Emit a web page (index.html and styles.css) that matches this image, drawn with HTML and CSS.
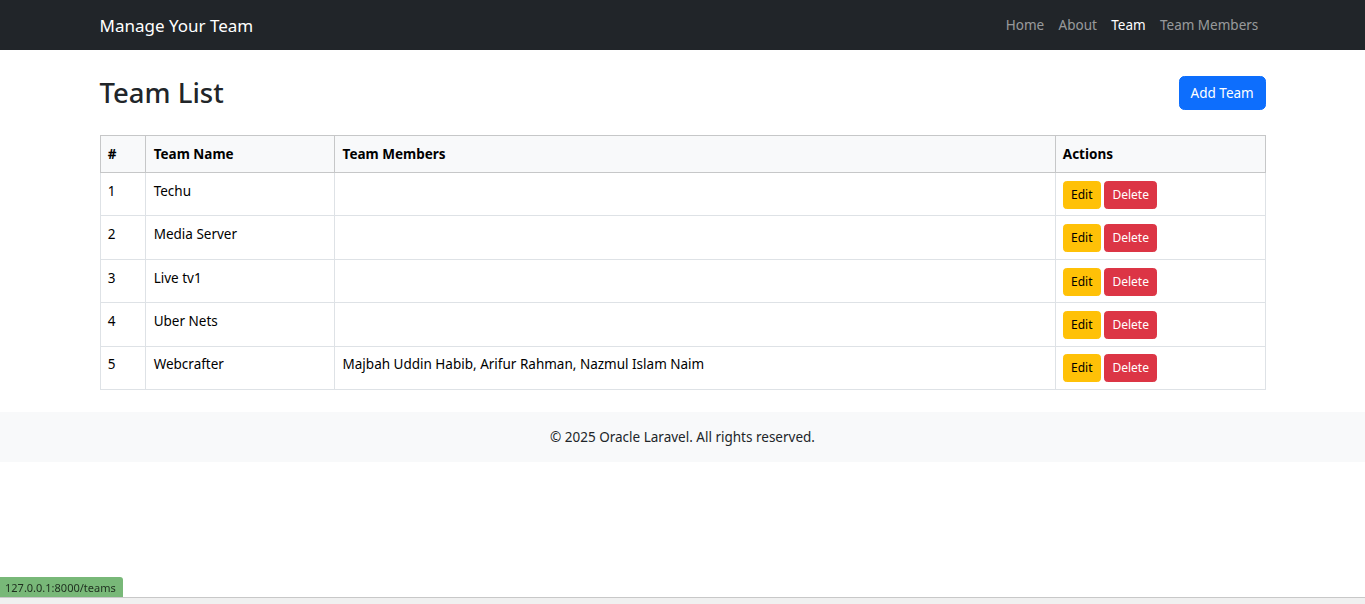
FILE: index.html
```html
<!DOCTYPE html>
<html lang="en">
<head>
<meta charset="utf-8">
<title>Team List</title>
<link rel="stylesheet" href="styles.css">
</head>
<body>
<nav class="navbar">
  <div class="container nav-inner">
    <a class="brand" href="#">Manage Your Team</a>
    <ul class="nav-links">
      <li><a href="#">Home</a></li>
      <li><a href="#">About</a></li>
      <li><a href="#" class="active">Team</a></li>
      <li><a href="#">Team Members</a></li>
    </ul>
  </div>
</nav>
<main class="container main">
  <div class="page-head">
    <h1>Team List</h1>
    <a href="#" class="btn btn-primary">Add Team</a>
  </div>
  <table class="table">
    <thead>
      <tr>
        <th class="col-num">#</th>
        <th class="col-name">Team Name</th>
        <th class="col-members">Team Members</th>
        <th class="col-actions">Actions</th>
      </tr>
    </thead>
    <tbody>
      <tr><td>1</td><td>Techu</td><td></td><td><a href="#" class="btn-sm btn-warning">Edit</a><a href="#" class="btn-sm btn-danger">Delete</a></td></tr>
      <tr><td>2</td><td>Media Server</td><td></td><td><a href="#" class="btn-sm btn-warning">Edit</a><a href="#" class="btn-sm btn-danger">Delete</a></td></tr>
      <tr><td>3</td><td>Live tv1</td><td></td><td><a href="#" class="btn-sm btn-warning">Edit</a><a href="#" class="btn-sm btn-danger">Delete</a></td></tr>
      <tr><td>4</td><td>Uber Nets</td><td></td><td><a href="#" class="btn-sm btn-warning">Edit</a><a href="#" class="btn-sm btn-danger">Delete</a></td></tr>
      <tr><td>5</td><td>Webcrafter</td><td>Majbah Uddin Habib, Arifur Rahman, Nazmul Islam Naim</td><td><a href="#" class="btn-sm btn-warning">Edit</a><a href="#" class="btn-sm btn-danger">Delete</a></td></tr>
    </tbody>
  </table>
</main>
<footer class="footer">
  <p>© 2025 Oracle Laravel. All rights reserved.</p>
</footer>
<div class="status-bar">
  <span class="status-url">127.0.0.1:8000/teams</span>
</div>
</body>
</html>
```
FILE: styles.css
```css
* { box-sizing: border-box; }
html, body { margin: 0; padding: 0; }
body {
  font-family: "Noto Sans", "Open Sans", "Liberation Sans", sans-serif;
  font-size: 13.5px;
  line-height: 21.6px;
  color: #212529;
  background: #fff;
}
a { text-decoration: none; }

.container {
  width: 1166px;
  margin: 0 auto;
}

.navbar {
  background: #212529;
  height: 50px;
}
.nav-inner {
  height: 50px;
  display: flex;
  align-items: center;
  justify-content: space-between;
}
.brand {
  color: #fff;
  font-size: 17px;
  line-height: 27px;
  padding-top: 1px;
}
.nav-links {
  list-style: none;
  margin: 0;
  padding: 0;
  display: flex;
}
.nav-links a {
  display: block;
  padding: 8px 7.2px 6px;
  color: rgba(255,255,255,0.55);
  font-size: 13.5px;
}
.nav-links a.active { color: #fff; }

.main { padding-top: 22px; }
.page-head {
  display: flex;
  justify-content: space-between;
  align-items: center;
  margin-bottom: 21px;
  height: 42px;
}
h1 {
  margin: 0;
  font-size: 27.5px;
  font-weight: 500;
  line-height: 1.2;
  padding-bottom: 1px;
}

.btn {
  display: inline-block;
  padding: 6.4px 10.8px 4.4px;
  font-size: 13.5px;
  line-height: 21.6px;
  border: 1px solid transparent;
  border-radius: 5.4px;
}
.btn-primary {
  background: #0d6efd;
  border-color: #0d6efd;
  color: #fff;
}

.table {
  width: 100%;
  border-collapse: collapse;
  margin-bottom: 22px;
}
.table th, .table td {
  border: 1px solid #dee2e6;
  padding: 7.8px 7.2px 6.5px;
  text-align: left;
  vertical-align: top;
}
.table thead th {
  background: #f8f9fa;
  border-color: #c6c7c8;
  font-weight: 700;
  color: #000;
  vertical-align: bottom;
  padding: 8.2px 7.2px 6.2px;
}
.table tbody td { color: #000; }
.col-num { width: 46px; }
.col-name { width: 189px; }
.col-members { width: 721px; }
.col-actions { width: 210px; }

.btn-sm {
  display: inline-block;
  padding: 4.1px 7.2px 3.1px;
  font-size: 12px;
  line-height: 18.9px;
  border: 1px solid transparent;
  border-radius: 3.6px;
  margin-right: 3.6px;
}
.btn-warning { background: #ffc107; border-color: #ffc107; color: #000; }
.btn-danger { background: #dc3545; border-color: #dc3545; color: #fff; }

.footer {
  background: #f8f9fa;
  text-align: center;
  padding: 15.4px 0 13.4px;
}
.footer p { margin: 0; line-height: 21.6px; }

.status-bar {
  position: fixed;
  left: 0;
  right: 0;
  bottom: 0;
  height: 26px;
  border-bottom: 6px solid #f0f0f0;
  display: flex;
  align-items: flex-end;
}
.status-bar::after {
  content: "";
  position: absolute;
  left: 0; right: 0; bottom: 0;
  height: 1px;
  background: #c8c8c8;
}
.status-url {
  background: #78b878;
  color: #1e2e1e;
  font-family: "Noto Sans", sans-serif;
  font-size: 11px;
  line-height: 20px;
  padding: 1px 5px 0;
  width: 123px;
  border-top-right-radius: 3px;
  white-space: nowrap;
}
```
